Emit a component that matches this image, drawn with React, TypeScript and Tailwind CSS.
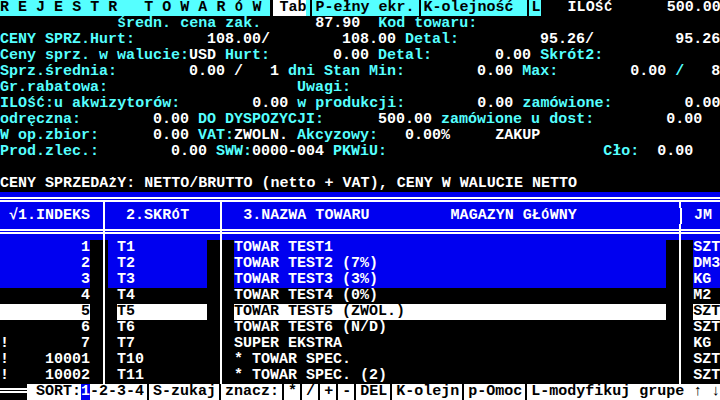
import React from "react";

// 80x25 text screen, 9x16 cells (Liberation Mono 15px = 9px advance)
const CY = "text-[#55ffff]";
const WH = "text-white";
const BLUE = "bg-[#0000f0]";

type Seg = [string, string?];

// accented capitals are drawn smaller so the mark stays inside the 16px cell, like the VGA font
const ACC = "ŚÓĆŻŹŃ";
const fmt = (t: string) =>
  t.split("").some((ch) => ACC.includes(ch))
    ? t.split("").map((ch, i) =>
        ACC.includes(ch) ? (
          <span key={i} className="inline-block w-[9px] text-center text-[13px]">
            {ch}
          </span>
        ) : (
          ch
        )
      )
    : t;

const Row = ({ children, bg = "bg-black" }: { children: React.ReactNode; bg?: string }) => (
  <div className={`flex h-4 leading-4 whitespace-pre ${bg}`}>{children}</div>
);

const S = ({ t, c = "" }: { t: string; c?: string }) => <span className={`whitespace-pre ${c}`}>{fmt(t)}</span>;

const Txt = ({ segs }: { segs: Seg[] }) => (
  <>
    {segs.map(([t, c], i) => (
      <S key={i} t={t} c={c ?? WH} />
    ))}
  </>
);

// single vertical line cell │ (tee: ╤, cross: ╪)
const V = ({ bg = "bg-black", tee = false, cross = false }: { bg?: string; tee?: boolean; cross?: boolean }) => (
  <span className={`relative w-[9px] h-4 shrink-0 ${bg}`}>
    {(tee || cross) && (
      <>
        <span className="absolute inset-x-0 top-[5px] h-[2px] bg-white" />
        <span className="absolute inset-x-0 top-[8px] h-[2px] bg-white" />
      </>
    )}
    <span className={`absolute left-[4px] w-[2px] bottom-0 bg-white ${tee ? "top-[8px]" : "top-0"}`} />
  </span>
);

// run of ═
const H = ({ n }: { n: number }) => (
  <span className="relative whitespace-pre">
    {" ".repeat(n)}
    <span className="absolute inset-x-0 top-[5px] h-[2px] bg-white" />
    <span className="absolute inset-x-0 top-[8px] h-[2px] bg-white" />
  </span>
);

// separator in the cyan title bar
const CSep = () => (
  <span className="relative w-[9px] h-4 shrink-0 bg-[#55ffff]">
    <span className="absolute left-[4px] w-[2px] inset-y-0 bg-black" />
  </span>
);

// separator in the white key bar
const KSep = () => (
  <span className="relative w-[9px] h-4 shrink-0 bg-white">
    <span className="absolute left-[3px] w-[2px] inset-y-0 bg-black" />
  </span>
);

const items = [
  { m: " ", i: "1", s: "T1", n: "TOWAR TEST1", j: "SZT", hl: "blue" },
  { m: " ", i: "2", s: "T2", n: "TOWAR TEST2 (7%)", j: "DM3", hl: "blue" },
  { m: " ", i: "3", s: "T3", n: "TOWAR TEST3 (3%)", j: "KG", hl: "blue" },
  { m: " ", i: "4", s: "T4", n: "TOWAR TEST4 (0%)", j: "M2", hl: "" },
  { m: " ", i: "5", s: "T5", n: "TOWAR TEST5 (ZWOL.)", j: "SZT", hl: "white" },
  { m: " ", i: "6", s: "T6", n: "TOWAR TEST6 (N/D)", j: "SZT", hl: "" },
  { m: "!", i: "7", s: "T7", n: "SUPER EKSTRA", j: "KG", hl: "" },
  { m: "!", i: "10001", s: "T10", n: "* TOWAR SPEC.", j: "SZT", hl: "" },
  { m: "!", i: "10002", s: "T11", n: "* TOWAR SPEC. (2)", j: "SZT", hl: "" },
];

const hlClass = (hl: string) =>
  hl === "blue" ? "bg-[#0000f0] text-white" : hl === "white" ? "bg-white text-black" : "bg-black text-white";

export default function App() {
  return (
    <div
      className="w-[720px] h-[400px] overflow-hidden bg-black text-[15px] font-bold"
      style={{ fontFamily: '"Liberation Mono", "DejaVu Sans Mono", monospace' }}
    >
      {/* title bar */}
      <Row>
        <S t="R E J E S T R   T O W A R Ó W " c="bg-[#55ffff] text-black" />
        <span className="relative w-[9px] h-4 shrink-0 bg-black">
          <span className="absolute left-[3px] right-0 inset-y-0 bg-white" />
        </span>
        <S t="Tab" c="bg-white text-black" />
        <CSep />
        <S t="P-ełny ekr." c="bg-[#55ffff] text-black" />
        <CSep />
        <S t="K-olejność " c="bg-[#55ffff] text-black" />
        <CSep />
        <S t="L" c="bg-[#55ffff] text-black" />
        <S t="   ILOŚĆ      500.00" c="text-white" />
      </Row>

      <Row>
        <Txt segs={[["             "], ["Średn. cena zak.", CY], ["      87.90  "], ["Kod towaru:", CY]]} />
      </Row>
      <Row>
        <Txt
          segs={[
            ["CENY SPRZ.Hurt:", CY],
            ["        108.00/        108.00 "],
            ["Detal:", CY],
            ["         95.26/         95.26"],
          ]}
        />
      </Row>
      <Row>
        <Txt
          segs={[
            ["Ceny sprz. w walucie:", CY],
            ["USD "],
            ["Hurt:", CY],
            ["       0.00 "],
            ["Detal:", CY],
            ["       0.00 "],
            ["Skrót2:", CY],
          ]}
        />
      </Row>
      <Row>
        <Txt
          segs={[
            ["Sprz.średnia:", CY],
            ["        0.00 /   1 "],
            ["dni Stan Min:", CY],
            ["        0.00 "],
            ["Max:", CY],
            ["        0.00 "],
            ["/", CY],
            ["   8"],
          ]}
        />
      </Row>
      <Row>
        <Txt segs={[["Gr.rabatowa:", CY], ["                     "], ["Uwagi:", CY]]} />
      </Row>
      <Row>
        <Txt
          segs={[
            ["ILOŚĆ:u akwizytorów:", CY],
            ["        0.00 "],
            ["w produkcji:", CY],
            ["        0.00 "],
            ["zamówione:", CY],
            ["        0.00"],
          ]}
        />
      </Row>
      <Row>
        <Txt
          segs={[
            ["odręczna:", CY],
            ["        0.00 "],
            ["DO DYSPOZYCJI:", CY],
            ["      500.00 "],
            ["zamówione u dost:", CY],
            ["        0.00"],
          ]}
        />
      </Row>
      <Row>
        <Txt
          segs={[
            ["W op.zbior:", CY],
            ["      0.00 "],
            ["VAT:", CY],
            ["ZWOLN. "],
            ["Akcyzowy:", CY],
            ["   0.00%     ZAKUP"],
          ]}
        />
      </Row>
      <Row>
        <Txt
          segs={[
            ["Prod.zlec.:", CY],
            ["        0.00 "],
            ["SWW:", CY],
            ["0000-004 "],
            ["PKWiU:", CY],
            ["                        "],
            ["Cło:", CY],
            ["  0.00"],
          ]}
        />
      </Row>
      <Row>
        <span> </span>
      </Row>
      <Row>
        <Txt segs={[["CENY SPRZEDAŻY: NETTO/BRUTTO (netto + VAT), CENY W WALUCIE NETTO"]]} />
      </Row>

      {/* table header */}
      <Row bg={BLUE}>
        <H n={11} />
        <V bg={BLUE} tee />
        <H n={12} />
        <V bg={BLUE} tee />
        <H n={50} />
        <V bg={BLUE} tee />
        <H n={4} />
      </Row>
      <Row bg={BLUE}>
        <S t=" √1.INDEKS " c="text-white" />
        <V bg={BLUE} />
        <S t="  2.SKRÓT   " c="text-white" />
        <V bg={BLUE} />
        <S t="  3.NAZWA TOWARU         MAGAZYN GŁÓWNY           " c="text-white" />
        <V bg={BLUE} />
        <S t=" JM " c="text-white" />
      </Row>
      <Row bg={BLUE}>
        <H n={11} />
        <V bg={BLUE} cross />
        <H n={12} />
        <V bg={BLUE} cross />
        <H n={50} />
        <V bg={BLUE} cross />
        <H n={4} />
      </Row>

      {/* rows */}
      {items.map((it) => (
        <Row key={it.i}>
          <span className={`whitespace-pre ${hlClass(it.hl)}`}>{it.m + it.i.padStart(9)}</span>
          <span className="whitespace-pre"> </span>
          <V />
          {it.hl === "white" ? (
            <>
              <span className="whitespace-pre"> </span>
              <span className={`whitespace-pre ${hlClass(it.hl)}`}>{it.s.padEnd(10)}</span>
            </>
          ) : (
            <span className={`whitespace-pre ${hlClass(it.hl)}`}>{" " + it.s.padEnd(10)}</span>
          )}
          <span className="whitespace-pre"> </span>
          <V />
          <span className="whitespace-pre"> </span>
          <span className={`whitespace-pre ${hlClass(it.hl)}`}>{it.n.padEnd(48)}</span>
          <span className="whitespace-pre"> </span>
          <V />
          <span className="whitespace-pre"> </span>
          <span className={`whitespace-pre ${hlClass(it.hl)}`}>{it.j.padEnd(3)}</span>
        </Row>
      ))}

      {/* key bar */}
      <Row>
        <span className="text-white">
          <H n={3} />
        </span>
        <div className="flex flex-1 bg-white text-black">
          <span className="whitespace-pre">{" SORT:"}</span>
          <span className="whitespace-pre bg-[#0000f0] text-white">1</span>
          <span className="whitespace-pre">-2-3-4</span>
          <KSep />
          <span className="whitespace-pre">S-zukaj</span>
          <KSep />
          <span className="whitespace-pre">znacz:</span>
          <KSep />
          <span className="whitespace-pre">*</span>
          <KSep />
          <span className="whitespace-pre">/</span>
          <KSep />
          <span className="whitespace-pre">+</span>
          <KSep />
          <span className="whitespace-pre">-</span>
          <KSep />
          <span className="whitespace-pre">DEL</span>
          <KSep />
          <span className="whitespace-pre">K-olejn</span>
          <KSep />
          <span className="whitespace-pre">p-Omoc</span>
          <KSep />
          <span className="whitespace-pre">{"L-modyfikuj grupe ↑ ↓"}</span>
        </div>
      </Row>
    </div>
  );
}
